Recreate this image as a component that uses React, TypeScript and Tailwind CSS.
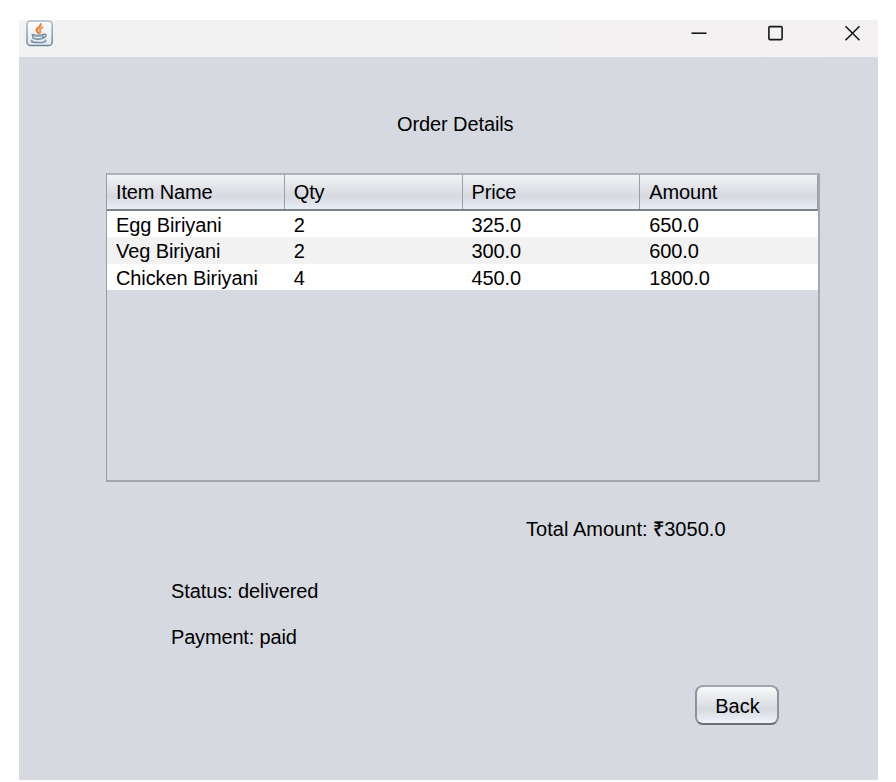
const columns = ["Item Name", "Qty", "Price", "Amount"];

const rows = [
  ["Egg Biriyani", "2", "325.0", "650.0"],
  ["Veg Biriyani", "2", "300.0", "600.0"],
  ["Chicken Biriyani", "4", "450.0", "1800.0"],
];

function JavaIcon() {
  return (
    <svg width="28" height="28" viewBox="0 0 28 28" fill="none">
      <defs>
        <linearGradient id="tile" x1="0" y1="0" x2="0" y2="1">
          <stop offset="0" stopColor="#ffffff" />
          <stop offset="1" stopColor="#e4e8ec" />
        </linearGradient>
        <linearGradient id="edge" x1="0" y1="0" x2="0" y2="1">
          <stop offset="0" stopColor="#a9bac7" />
          <stop offset="1" stopColor="#6b889d" />
        </linearGradient>
      </defs>
      <rect x="1" y="0.9" width="25.2" height="24.6" rx="3.6" fill="url(#tile)" stroke="url(#edge)" strokeWidth="1.5" />
      <path d="M14.6 4.200c.8 2.800-4.400 3.600-3.900 6.200.3 1.400 1.500 1.600 1.800 2.800" stroke="#ee7d2b" strokeWidth="2.200" strokeLinecap="round" />
      <path d="M16.600 7.400c-2.600 1-3.400 2.200-2.500 3.500.6 1 .2 1.600-.4 2.300" stroke="#ef8b42" strokeWidth="1.900" strokeLinecap="round" />
      <path d="M6.200 14.200c3 1.100 8.300 1.100 11.300 0l-.8 4.300c-2.600 1-7.100 1-9.600 0z" fill="#9fb2c1" stroke="#7590a4" strokeWidth="1.200" />
      <path d="M17.500 14.400c3.400-.7 3.600 2.500-.6 3.800" stroke="#7892a6" strokeWidth="1.500" />
      <path d="M8.200 17.100c2.300.7 5.600.7 7.800 0" stroke="#e7edf1" strokeWidth="1" />
      <path d="M5.800 20.600c-1.200 1.400 1.800 1.900 6.600 1.900s8.200-.7 7-2.200" stroke="#7892a6" strokeWidth="1.700" strokeLinecap="round" />
    </svg>
  );
}

function TitleBar() {
  return (
    <header className="flex h-[37px] items-start justify-between bg-gradient-to-r from-[#f2f2f2] to-[#f4f1f3] pl-[7px] pr-[17px]">
      <JavaIcon />
      <div className="flex gap-[60px] pt-[5px]">
        <svg width="17" height="17" viewBox="0 0 17 17" fill="none" stroke="#18181b" strokeWidth="1.600">
          <path d="M1.500 8.200h15" />
        </svg>
        <svg width="17" height="17" viewBox="0 0 17 17" fill="none" stroke="#18181b" strokeWidth="1.600">
          <rect x="1.900" y="1.600" width="13.200" height="13" rx="1.200" />
        </svg>
        <svg width="17" height="17" viewBox="0 0 17 17" fill="none" stroke="#18181b" strokeWidth="1.600">
          <path d="M1.500 1.200l14 14M15.500 1.200l-14 14" />
        </svg>
      </div>
    </header>
  );
}

function OrderTable() {
  return (
    <div className="ml-[87px] mt-[37px] h-[309px] w-[714px] border-2 border-l border-b-[#a2a6af] border-l-[#989ca6] border-r-[#a4a8b1] border-t-[#adb1b9] bg-[#d6d9df]">
      <div className="grid h-[36px] grid-cols-4 border-b-2 border-[#7c828c] bg-[linear-gradient(to_bottom,#f3f4f6_0%,#e0e2e7_40%,#d6d9df_62%,#e9edf6_100%)]">
        {columns.map((name) => (
          <div key={name} className="flex items-center border-r border-[#9a9ea8] pl-[9px] tracking-[-0.15px]">
            {name}
          </div>
        ))}
      </div>
      {rows.map((row) => (
        <div key={row[0]} className="grid h-[26.3px] grid-cols-4 bg-[#f2f2f2] leading-[28px] first:bg-white last:bg-white even:bg-white">
          {row.map((cell, i) => (
            <div key={i} className="pl-[9px]">{cell}</div>
          ))}
        </div>
      ))}
    </div>
  );
}

export default function App() {
  return (
    <div className="h-[782px] w-[896px] bg-white pl-[19px] pt-[20px] font-['Liberation_Sans',Arial,sans-serif] text-[20px] leading-[24px] tracking-[-0.1px] text-black">
      <main className="flex h-[760px] w-[859px] flex-col bg-[#d6d9df]">
        <TitleBar />
        <h1 className="ml-[378px] mt-[55px]">Order Details</h1>
        <OrderTable />
        <p className="ml-[507px] mt-[35px] tracking-[0.030px]">
          Total Amount: <span className="[-webkit-text-stroke:0.4px_black]">₹</span>3050.0
        </p>
        <p className="ml-[152px] mt-[38px]">Status: delivered</p>
        <p className="ml-[152px] mt-[22px] tracking-[-0.17px]">Payment: paid</p>
        <button className="ml-[676px] mt-[36px] flex h-[40px] w-[84px] items-center justify-center rounded-[8px] border-2 border-[#8f9298] border-b-[#6b6e73] border-t-[#a0a3a8] bg-[linear-gradient(to_bottom,#f8f9fa_0%,#e2e4e8_42%,#d6d9df_62%,#eff3fc_100%)] pl-px pt-[2px] tracking-normal">
          Back
        </button>
      </main>
    </div>
  );
}
